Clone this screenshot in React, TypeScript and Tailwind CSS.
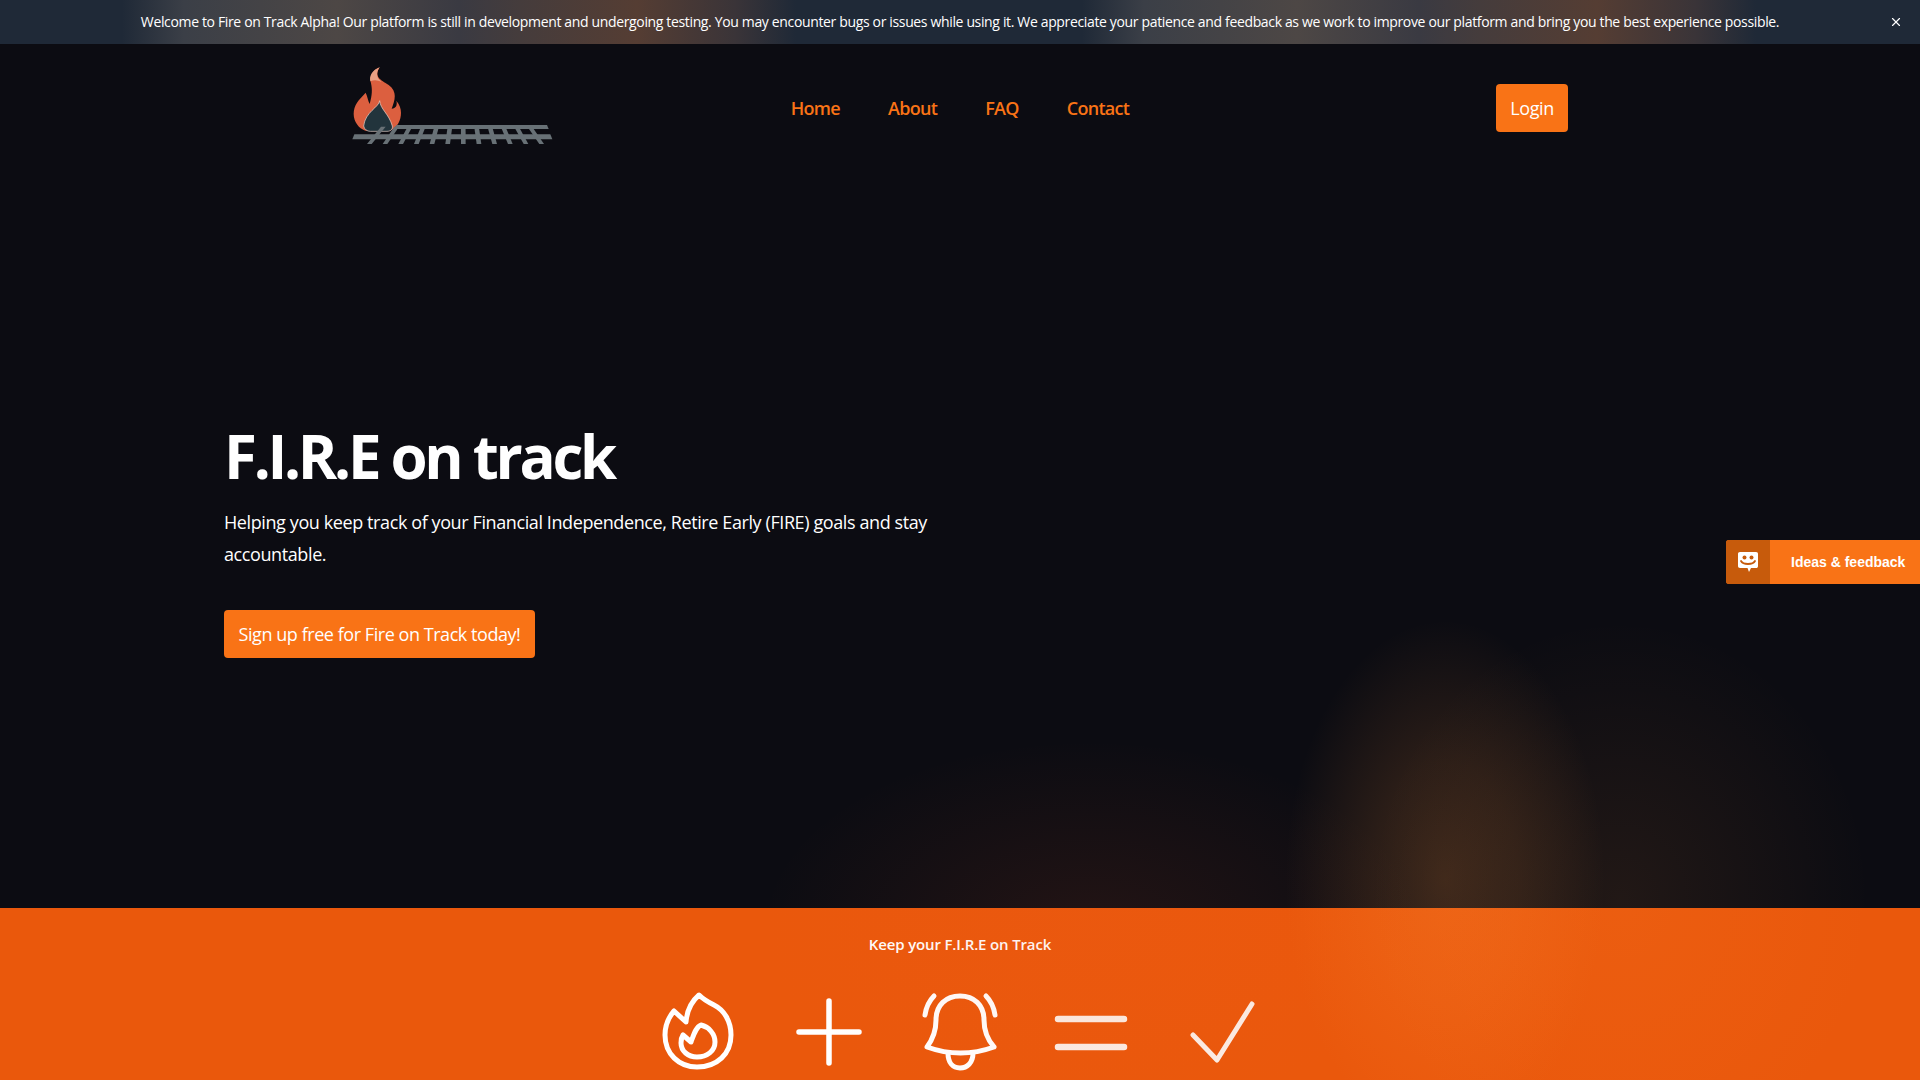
import { X } from "lucide-react";

const navLinks = ["Home", "About", "FAQ", "Contact"];

function Logo() {
  const ties = [0, 1, 2, 3, 4, 5, 6, 7, 8, 9, 10, 11];
  return (
    <svg viewBox="95 45 606 258" className="h-[86px] w-[202px]">
      {/* flame */}
      <path
        d="M178 52C156 60 146 82 152 100C156 118 156 135 148 162C142 150 142 140 136 128C115 150 100 165 100 192C100 215 115 235 135 242L210 242C232 232 242 210 242 188C242 175 238 165 228 152C232 165 226 176 214 176C224 150 232 125 205 105C180 90 160 80 178 52Z"
        fill="#dc5f3f"
      />
      <path d="M178 52C156 60 146 78 150 94C162 88 172 90 184 96C168 84 166 68 178 52Z" fill="#e9a084" />
      <path d="M178 152C176 172 135 185 130 228C132 238 140 244 150 244L200 244C210 244 218 238 216 228C205 190 180 178 178 152Z" fill="#22343c" stroke="#e8d8d0" strokeWidth="2" />
      {/* rails */}
      <path d="M228 225H680L685 237H222Z" fill="#687176" />
      <path d="M102 253H690L696 268H96Z" fill="#687176" />
      {ties.map((i) => {
        const bottom = 140 + i * 47;
        const top = 420 + (bottom - 420) * 0.85;
        return <path key={i} d={`M${top} 230H${top + 14}L${bottom + 14} 282H${bottom}Z`} fill="#687176" />;
      })}
    </svg>
  );
}

function FlameIcon() {
  return (
    <svg viewBox="0 0 80 80" fill="none" stroke="white" strokeWidth="5" strokeLinecap="round" strokeLinejoin="round" className="h-20 w-20">
      <path d="M41 4C34 10 29 19 28 31L16 20C10 27 7 35 7 44C7 63 21 76 39 76C59 76 73 63 73 44C73 30 66 19 56 14C50 11 45 8 41 4Z" />
      <path d="M43 34C38 36 36 43 33 51L25 44C23 47 23 49 23 52C23 60 30 66 39 66C49 66 57 60 57 51C57 43 51 36 43 34Z" />
    </svg>
  );
}

function PlusIcon() {
  return (
    <svg viewBox="0 0 80 80" fill="none" stroke="white" strokeWidth="5.5" strokeLinecap="round" className="h-20 w-20">
      <path d="M40 10V72M10 41H70" />
    </svg>
  );
}

function BellIcon() {
  return (
    <svg viewBox="0 0 80 80" fill="none" stroke="white" strokeWidth="5" strokeLinecap="round" strokeLinejoin="round" className="h-20 w-20">
      <path d="M7 56C13 48 16 40 16 29C16 14 26 5 40 5C54 5 64 14 64 29C64 40 67 48 74 56C52 64 29 64 7 56Z" />
      <path d="M28 62C28 72 33 77 40 77C47 77 53 72 53 62" />
      <path d="M14 5C9 10 6 17 5 24M66 5C71 10 74 17 75 24" />
    </svg>
  );
}

function EqualsIcon() {
  return (
    <svg viewBox="0 0 80 80" fill="none" stroke="#fbeee6" strokeWidth="6.5" strokeLinecap="round" className="h-20 w-20">
      <path d="M7 28H73M7 56H73" />
    </svg>
  );
}

function CheckIcon() {
  return (
    <svg viewBox="0 0 80 80" fill="none" stroke="#fbeee6" strokeWidth="5" strokeLinecap="round" strokeLinejoin="round" className="h-20 w-20">
      <path d="M11 44L35 69L70 13" />
    </svg>
  );
}

function FeedbackTab() {
  return (
    <div className="fixed right-0 top-[540px] z-20 flex h-11 w-[194px] items-center overflow-hidden rounded-l-[3px] bg-[#f97316] font-['Liberation_Sans',sans-serif] text-[14px] font-bold text-white">
      <div className="flex h-11 w-11 items-center justify-center bg-[#c75b0c]">
        <svg viewBox="0 0 24 24" className="h-6 w-6">
          <path d="M4 2H20C21.500 2 22 2.700 22 4V16C22 17.500 21.300 18 20 18H15L13 22L11.500 18H4C2.700 18 2 17.300 2 16V4C2 2.700 2.700 2 4 2Z" fill="white" />
          <circle cx="8.500" cy="7.500" r="2" fill="#c75b0c" />
          <circle cx="15.500" cy="7.500" r="2" fill="#c75b0c" />
          <path d="M5 11C7 15 17 15 19 11" fill="none" stroke="#c75b0c" strokeWidth="1.800" strokeLinecap="round" />
        </svg>
      </div>
      <span className="ml-[21px]">Ideas &amp; feedback</span>
    </div>
  );
}

export default function App() {
  return (
    <div className="relative h-[1080px] overflow-hidden bg-[#0c0c12] font-['Open_Sans',sans-serif] text-white">
      {/* top banner */}
      <div className="flex h-11 items-center justify-center bg-[linear-gradient(90deg,#1f2937_0px,#1f2937_122px,#3b3f47_184px,#4d4745_337px,#3a3a42_459px,#453c3c_520px,#553d33_637px,#3a3438_735px,#1f2937_796px,#1f2937_960px)] bg-[length:960px_100%]">
        <p className="text-sm tracking-[-0.35px]">
          Welcome to Fire on Track Alpha! Our platform is still in development and undergoing testing. You may encounter bugs or issues while using it. We appreciate your patience and feedback as we work to improve our platform and bring you the best experience possible.
        </p>
        <button className="absolute right-[17px] top-[15px]">
          <X className="h-[14px] w-[14px]" />
        </button>
      </div>

      {/* header */}
      <header className="mx-auto grid max-w-7xl grid-cols-3 items-center px-8 pt-[21px]">
        <Logo />
        <nav className="flex items-center justify-center gap-12">
          {navLinks.map((link) => (
            <a key={link} className="text-lg font-semibold tracking-[-0.7px] text-[#f97316]">
              {link}
            </a>
          ))}
        </nav>
        <div className="flex justify-end">
          <button className="h-12 w-[72px] rounded bg-[#f97316] text-lg tracking-[-0.4px]">Login</button>
        </div>
      </header>

      {/* hero */}
      <section className="mx-auto h-[757px] max-w-[1536px] px-8 pt-[275px]">
        <h1 className="text-[60px] font-bold leading-none tracking-[-3.3px]">F.I.R.E on track</h1>
        <p className="mt-5 max-w-[720px] text-lg leading-8 tracking-[-0.4px]">
          Helping you keep track of your Financial Independence, Retire Early (FIRE) goals and stay accountable.
        </p>
        <button className="mt-10 h-12 w-[311px] rounded bg-[#f97316] text-lg tracking-[-0.45px]">
          Sign up free for Fire on Track today!
        </button>
      </section>

      {/* orange band */}
      <section className="h-[172px] bg-[#ea580c] pt-[25px]">
        <h2 className="text-center text-[15px] font-semibold leading-[22px] tracking-[-0.15px]">Keep your F.I.R.E on Track</h2>
        <div className="mt-9 flex justify-center gap-[51px]">
          <FlameIcon />
          <PlusIcon />
          <BellIcon />
          <EqualsIcon />
          <CheckIcon />
        </div>
      </section>

      {/* glow sits over both sections */}
      <div className="pointer-events-none absolute inset-0 bg-[radial-gradient(ellipse_160px_260px_at_1445px_880px,rgba(251,146,60,0.2),rgba(251,146,60,0.13)_45%,transparent),radial-gradient(ellipse_250px_280px_at_1620px_900px,rgba(251,146,60,0.09),transparent),radial-gradient(ellipse_330px_190px_at_1090px_930px,rgba(239,90,40,0.1),transparent)]" />

      <FeedbackTab />
    </div>
  );
}
